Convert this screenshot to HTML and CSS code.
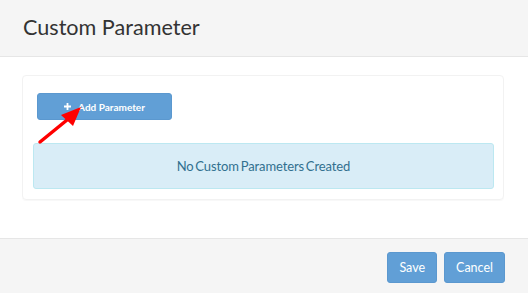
FILE: index.html
```html
<!DOCTYPE html>
<html lang="en">
<head>
    <meta charset="UTF-8">
    <title>Custom Parameter</title>
    <link rel="stylesheet" href="styles.css">
</head>
<body>

<div class="modal">
    <div class="modal-header">
        <h2>Custom Parameter</h2>
    </div>

    <div class="modal-body">
        <div class="panel">
            <div class="toolbar">
                <button class="btn btn-add">
                    <svg class="plus" width="7" height="7" viewBox="0 0 7 7"><path d="M2.6 0h1.8v2.6H7v1.8H4.4V7H2.6V4.4H0V2.6h2.6z" fill="#fff"/></svg>Add Parameter
                </button>
                <!-- annotation arrow -->
                <svg class="arrow" width="60" height="50" viewBox="0 0 60 50">
                    <line x1="5" y1="44" x2="32" y2="22" stroke="#ff0000" stroke-width="3.5" stroke-linecap="round"/>
                    <polygon points="46,9 26,17 38,28" fill="#ff0000"/>
                </svg>
            </div>
            <div class="alert-info">No Custom Parameters Created</div>
        </div>
    </div>

    <div class="modal-footer">
        <button class="btn btn-foot">Save</button>
        <button class="btn btn-foot">Cancel</button>
    </div>
</div>

</body>
</html>
```

FILE: styles.css
```css
body {
    margin: 0;
    font-family: Lato, "Open Sans", sans-serif;
    background-color: #fff;
}
.modal {
    width: 528px;
    height: 293px;
    display: flex;
    flex-direction: column;
}
.modal-header {
    height: 56px;
    background-color: #f5f5f5;
    border-bottom: 1px solid #e6e6e6;
    padding-left: 23px;
    display: flex;
    align-items: center;
}
.modal-header h2 {
    margin: 0;
    font-size: 21.6px;
    font-weight: normal;
    color: #333;
    position: relative;
    top: -1px;
}
.modal-body {
    padding: 18px 24px 38px 22px;
}
.panel {
    border: 1px solid #f2f2f2;
    border-radius: 4px;
    padding: 17px 9px 10px 10px;
    box-shadow: 0 1px 1px rgba(0, 0, 0, 0.03);
}
.toolbar {
    position: relative;
    height: 27px;
    margin-bottom: 23px;
    padding-left: 4px;
}
.btn {
    font-family: Lato, "Open Sans", sans-serif;
    background-color: #619fd6;
    color: #fff;
    border: 1px solid #5b98cf;
    border-radius: 3px;
    cursor: pointer;
}
.btn-add {
    width: 135px;
    height: 27px;
    font-size: 10px;
    font-weight: bold;
    padding: 0;
    display: flex;
    align-items: center;
    justify-content: center;
}
.plus {
    margin-right: 7px;
}
.arrow {
    position: absolute;
    left: 2px;
    top: 5px;
}
.alert-info {
    height: 44px;
    background-color: #d9edf7;
    border: 1px solid #bce8f1;
    border-radius: 3px;
    color: #31708f;
    font-size: 13px;
    letter-spacing: -0.1px;
    word-spacing: -1.5px;
    display: flex;
    align-items: center;
    justify-content: center;
}
.modal-footer {
    flex: 1;
    background-color: #f5f5f5;
    border-top: 1px solid #e6e6e6;
    display: flex;
    justify-content: flex-end;
    align-items: flex-start;
    gap: 7px;
    padding: 13px 23px 0 0;
}
.btn-foot {
    height: 31px;
    font-size: 12.5px;
    padding: 0 11px;
}
```
